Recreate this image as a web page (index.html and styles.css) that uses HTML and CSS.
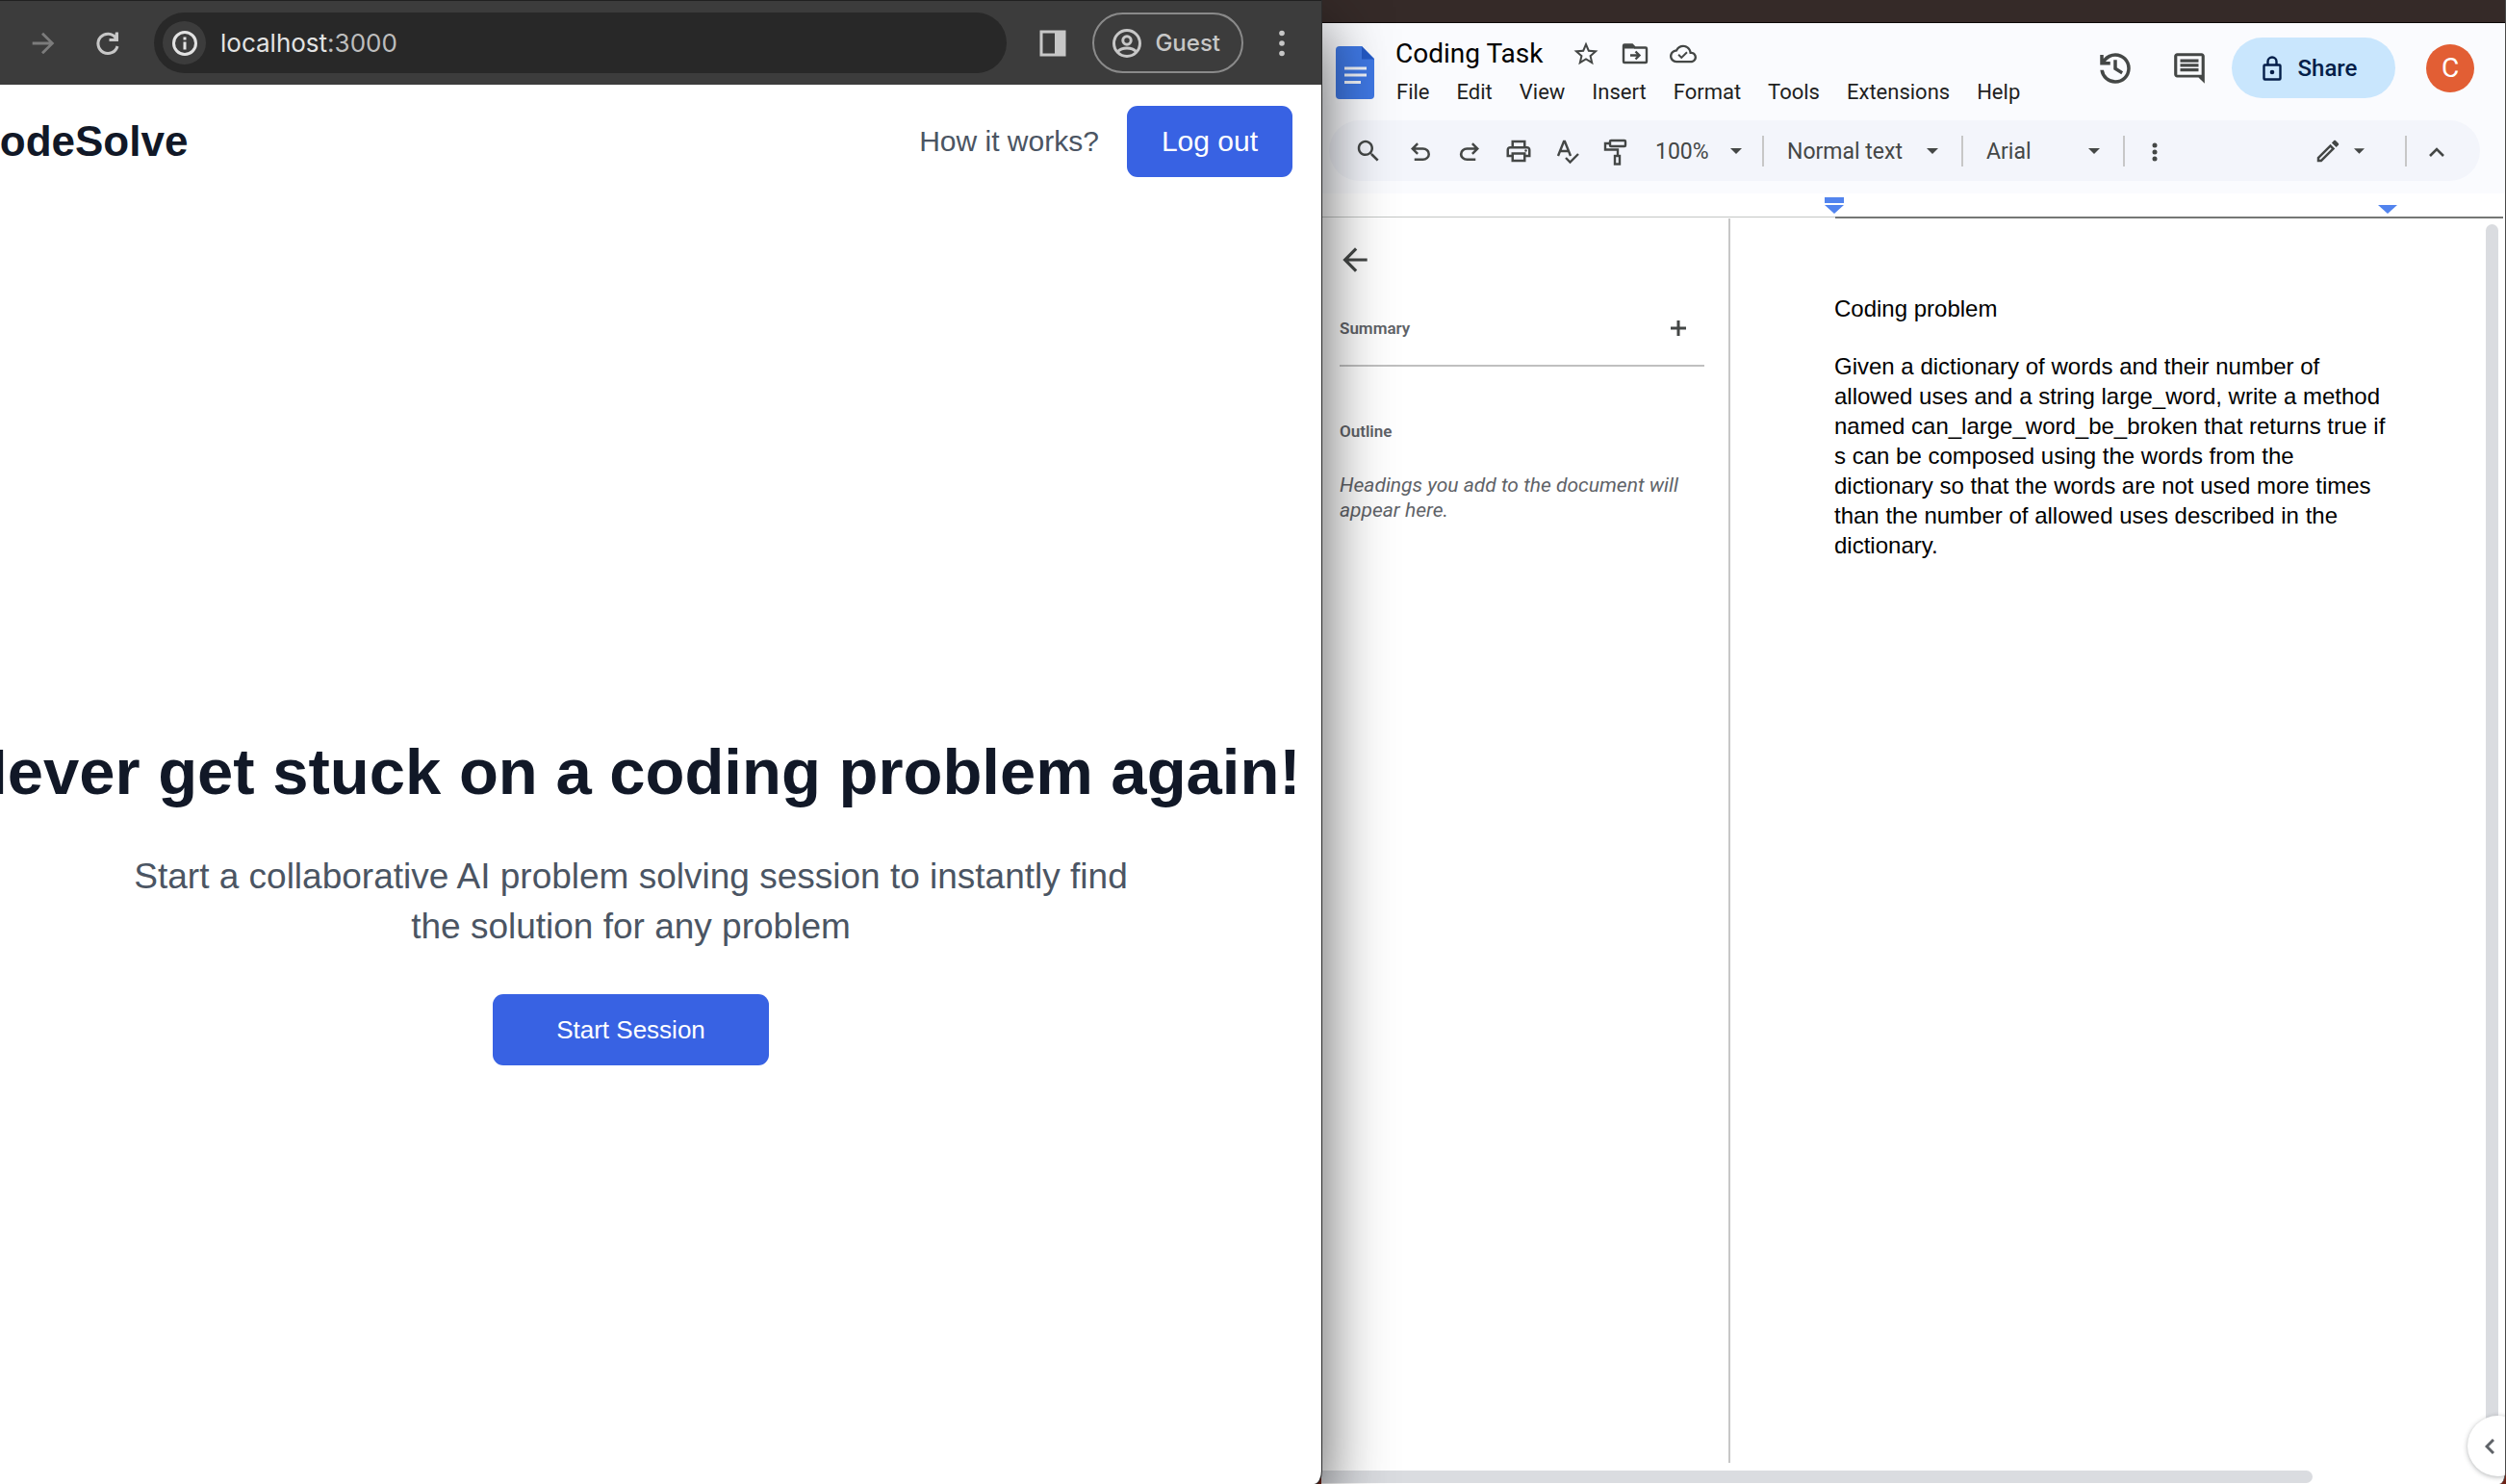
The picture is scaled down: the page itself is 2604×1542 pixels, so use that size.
FILE: index.html
```html
<!DOCTYPE html>
<html lang="en">
<head>
<meta charset="utf-8">
<title>CodeSolve</title>
<link rel="stylesheet" href="styles.css">
</head>
<body>
<div class="desktop">

  <section class="browser" aria-label="Browser window">
    <div class="browser-bar">
      <button class="bar-button bar-button-off" aria-label="Forward" disabled>
        <svg width="34" height="34" viewBox="0 0 24 24" fill="currentColor"><path d="M12 4l-1.41 1.41L16.17 11H4v2h12.17l-5.58 5.59L12 20l8-8z"/></svg>
      </button>
      <button class="bar-button" aria-label="Reload">
        <svg width="34" height="34" viewBox="0 0 34 34" fill="none" stroke="currentColor" stroke-width="3"><path d="M25.500 11.500A10.200 10.200 0 1 0 27 20"/><path d="M28 5.500V15H18.500v-3h5l1.500-6.500z" fill="currentColor" stroke="none"/></svg>
      </button>
      <div class="omnibox">
        <button class="site-info" aria-label="Site information">
          <svg width="28" height="28" viewBox="0 0 28 28" fill="none" stroke="currentColor" stroke-width="3"><circle cx="14" cy="14" r="11.500"/><path d="M14 12.500v8M14 7.500v3"/></svg>
        </button>
        <div class="address" role="textbox" aria-label="Address" contenteditable="true" spellcheck="false">localhost<span class="port">:3000</span></div>
      </div>
      <button class="bar-button panel-button" aria-label="Side panel">
        <svg width="28" height="28" viewBox="0 0 28 28"><rect x="2" y="2" width="24" height="24" fill="none" stroke="currentColor" stroke-width="3"/><rect x="16" y="2" width="10" height="24" fill="currentColor"/></svg>
      </button>
      <button class="profile">
        <svg width="32" height="32" viewBox="0 0 32 32" fill="none" stroke="currentColor" stroke-width="3"><circle cx="16" cy="16" r="13.500"/><circle cx="16" cy="13" r="4.200"/><path d="M6.500 24.500C11 19.800 21 19.800 25.500 24.500"/></svg>
        Guest
      </button>
      <button class="bar-button" aria-label="More">
        <svg width="34" height="34" viewBox="0 0 34 34" fill="currentColor"><circle cx="17" cy="6.500" r="2.800"/><circle cx="17" cy="17" r="2.800"/><circle cx="17" cy="27.500" r="2.800"/></svg>
      </button>
    </div>

    <header class="site-header">
      <a class="brand" href="#">CodeSolve</a>
      <nav class="site-nav">
        <a class="nav-link" href="#how">How it works?</a>
        <button class="primary">Log out</button>
      </nav>
    </header>
    <main class="hero">
      <h1 class="hero-title">Never get stuck on a coding problem again!</h1>
      <p class="hero-text">Start a collaborative AI problem solving session to instantly find the solution for any problem</p>
      <button class="primary primary-wide">Start Session</button>
    </main>
  </section>

  <section class="docs" aria-label="Document window">
    <div class="docs-titlebar"></div>
    <header class="docs-header">
      <svg class="docs-logo" width="40" height="55" viewBox="0 0 40 55"><path d="M4 0h23l13 13v38a4 4 0 0 1-4 4H4a4 4 0 0 1-4-4V4a4 4 0 0 1 4-4z" fill="#3f78e4"/><path d="M27 0l13 13.500H27z" fill="#2459c5"/><path d="M9 23h23M9 30h23M9 37.500h17" stroke="#f1f4fa" stroke-width="3"/></svg>
      <div class="docs-heading">
        <div class="title-row">
          <h2 class="doc-title">Coding Task</h2>
          <button class="icon-button" aria-label="Star"><svg width="30" height="30" viewBox="0 0 24 24" fill="currentColor"><path d="M22 9.240l-7.190-.62L12 2 9.190 8.630 2 9.240l5.460 4.730L5.820 21 12 17.270 18.180 21l-1.630-7.030L22 9.240zM12 15.400l-3.760 2.270 1-4.280-3.320-2.880 4.380-.38L12 6.100l1.710 4.040 4.380.38-3.320 2.880 1 4.280L12 15.400z"/></svg></button>
          <button class="icon-button" aria-label="Move"><svg width="30" height="30" viewBox="0 0 30 30" fill="none" stroke="currentColor" stroke-width="2.400"><path d="M3 7.500V23a1 1 0 0 0 1 1h22a1 1 0 0 0 1-1V9.500a1 1 0 0 0-1-1H15l-3-3H4a1 1 0 0 0-1 1z"/><path d="M4 6h8l3 3.500H4z" fill="currentColor" stroke="none"/><path d="M10 16.500h9M15.500 12.500l4 4-4 4"/></svg></button>
          <button class="icon-button" aria-label="Saved to Drive"><svg width="28" height="28" viewBox="0 0 24 24" fill="currentColor"><path d="M19.350 10.040C18.670 6.590 15.640 4 12 4 9.110 4 6.600 5.640 5.350 8.040 2.340 8.360 0 10.910 0 14c0 3.310 2.690 6 6 6h13c2.760 0 5-2.240 5-5 0-2.640-2.050-4.780-4.650-4.960zM19 18H6c-2.210 0-4-1.790-4-4 0-2.050 1.530-3.760 3.560-3.970l1.070-.11.5-.95C8.080 7.140 9.940 6 12 6c2.620 0 4.880 1.860 5.390 4.430l.3 1.500 1.530.11c1.560.1 2.780 1.410 2.780 2.960 0 1.650-1.350 3-3 3zm-8.500-3.820l-2.090-2.090-1.200 1.200 3.290 3.290 5.500-5.500-1.200-1.200z"/></svg></button>
        </div>
        <nav class="menu" aria-label="Document menu">
          <button class="menu-item">File</button>
          <button class="menu-item">Edit</button>
          <button class="menu-item">View</button>
          <button class="menu-item">Insert</button>
          <button class="menu-item">Format</button>
          <button class="menu-item">Tools</button>
          <button class="menu-item">Extensions</button>
          <button class="menu-item">Help</button>
        </nav>
      </div>
      <div class="docs-actions">
        <button class="icon-button" aria-label="Version history"><svg width="42" height="42" viewBox="0 -960 960 960" fill="currentColor"><path d="M480-120q-138 0-240.500-91.500T122-440h82q14 104 92.500 172T480-200q117 0 198.500-81.500T760-480q0-117-81.500-198.500T480-760q-69 0-129 32t-101 88h110v80H120v-240h80v94q51-64 124.500-99T480-840q75 0 140.500 28.500t114 77q48.500 48.500 77 114T840-480q0 75-28.500 140.500t-77 114q-48.500 48.500-114 77T480-120Zm144-220L440-450v-230h80v184l144 88-40 68Z"/></svg></button>
        <button class="icon-button" aria-label="Comments"><svg width="38" height="38" viewBox="0 0 24 24" fill="currentColor"><path d="M21.990 4c0-1.100-.89-2-1.990-2H4c-1.100 0-2 .9-2 2v12c0 1.100.9 2 2 2h14l4 4-.01-18zM20 4v12.200H4V4h16zM6 12h12v2H6zm0-3h12v2H6zm0-3h12v2H6z"/></svg></button>
        <button class="share">
          <svg width="20" height="26" viewBox="0 0 20 26" fill="none" stroke="currentColor" stroke-width="2.400"><rect x="1.500" y="9.500" width="17" height="15" rx="1"/><path d="M5.500 9.500V6a4.500 4.500 0 0 1 9 0v3.500"/><circle cx="10" cy="17" r="2.300" fill="currentColor" stroke="none"/></svg>
          Share
        </button>
        <button class="avatar" aria-label="Account">C</button>
      </div>
    </header>

    <div class="toolbar" role="toolbar" aria-label="Formatting">
      <div class="tool-group">
        <button class="tool" aria-label="Search"><svg width="30" height="30" viewBox="0 0 24 24" fill="currentColor"><path d="M15.500 14h-.79l-.28-.27C15.410 12.590 16 11.110 16 9.500 16 5.910 13.090 3 9.500 3S3 5.910 3 9.500 5.910 16 9.500 16c1.610 0 3.090-.59 4.230-1.570l.27.28v.79l5 4.990L20.490 19l-4.990-5zm-6 0C7.010 14 5 11.990 5 9.500S7.010 5 9.500 5 14 7.010 14 9.500 11.990 14 9.500 14z"/></svg></button>
        <button class="tool" aria-label="Undo"><svg width="30" height="30" viewBox="0 -1000 960 960" fill="currentColor"><path d="M280-200v-80h284q63 0 109.500-40T720-420q0-60-46.500-100T564-560H312l104 104-56 56-200-200 200-200 56 56-104 104h252q97 0 169.500 63T800-420q0 94-72.500 157T564-200H280Z"/></svg></button>
        <button class="tool" aria-label="Redo"><svg width="30" height="30" viewBox="0 -1000 960 960" fill="currentColor"><path d="M396-200q-97 0-169.500-63T154-420q0-94 72.500-157T396-640h252L544-744l56-56 200 200-200 200-56-56 104-104H396q-63 0-109.500 40T240-420q0 60 46.500 100T396-280h284v80H396Z"/></svg></button>
        <button class="tool" aria-label="Print"><svg width="30" height="30" viewBox="0 0 24 24" fill="currentColor"><path d="M19 8h-1V3H6v5H5c-1.660 0-3 1.340-3 3v6h4v4h12v-4h4v-6c0-1.660-1.340-3-3-3zM8 5h8v3H8V5zm8 12v2H8v-4h8v2zm2-2v-2H6v2H4v-4c0-.55.45-1 1-1h14c.55 0 1 .45 1 1v4h-2z"/><circle cx="18" cy="11.500" r="1"/></svg></button>
        <button class="tool" aria-label="Spelling"><svg width="30" height="30" viewBox="0 0 30 30" fill="none" stroke="currentColor" stroke-width="2.400"><path d="M5 20L11 5h1l6 15M7 15h9M13 22l4.500 4.500L26 18"/></svg></button>
        <button class="tool" aria-label="Paint format"><svg width="30" height="30" viewBox="0 0 30 30" fill="none" stroke="currentColor" stroke-width="2.400"><rect x="8" y="4" width="16" height="6" rx="1"/><path d="M8 7H3v6.500h13V19"/><rect x="13" y="20" width="5" height="8.500"/></svg></button>
      </div>
      <label class="picker picker-zoom">
        <select class="picker-select" aria-label="Zoom"><option>100%</option></select>
        <svg width="12" height="6" viewBox="0 0 12 6" fill="currentColor"><path d="M0 0h12L6 6z"/></svg>
      </label>
      <span class="rule"></span>
      <label class="picker picker-style">
        <select class="picker-select" aria-label="Style"><option>Normal text</option></select>
        <svg width="12" height="6" viewBox="0 0 12 6" fill="currentColor"><path d="M0 0h12L6 6z"/></svg>
      </label>
      <span class="rule"></span>
      <label class="picker picker-font">
        <select class="picker-select" aria-label="Font"><option>Arial</option></select>
        <svg width="12" height="6" viewBox="0 0 12 6" fill="currentColor"><path d="M0 0h12L6 6z"/></svg>
      </label>
      <span class="rule"></span>
      <button class="tool" aria-label="More tools"><svg width="30" height="30" viewBox="0 0 30 30" fill="currentColor"><circle cx="15" cy="9" r="2.500"/><circle cx="15" cy="16" r="2.500"/><circle cx="15" cy="23" r="2.500"/></svg></button>
      <div class="tool-end">
        <button class="mode" aria-label="Editing mode">
          <svg width="30" height="30" viewBox="0 0 24 24" fill="currentColor"><path d="M14.060 9.020l.92.92L5.920 19H5v-.92l9.060-9.060M17.660 3c-.25 0-.51.1-.7.29l-1.830 1.830 3.750 3.750 1.830-1.830c.39-.39.39-1.020 0-1.410l-2.340-2.340c-.2-.2-.45-.29-.71-.29zm-3.600 3.190L3 17.250V21h3.750L17.810 9.940l-3.750-3.750z"/></svg>
          <svg width="11" height="6" viewBox="0 0 12 6" fill="currentColor"><path d="M0 0h12L6 6z"/></svg>
        </button>
        <span class="rule"></span>
        <button class="tool" aria-label="Hide menus"><svg width="30" height="30" viewBox="0 0 30 30" fill="none" stroke="currentColor" stroke-width="2.600"><path d="M8 20l7-7 7 7"/></svg></button>
      </div>
    </div>

    <div class="ruler">
      <div class="ruler-margin">
        <svg class="indent-left" width="20" height="17" viewBox="0 0 20 17" fill="#5284ee"><path d="M0 0h20v6H0zM0 8h20l-10 9z"/></svg>
      </div>
      <div class="ruler-page">
        <svg class="indent-right" width="20" height="9" viewBox="0 0 20 9" fill="#5284ee"><path d="M0 0h20l-10 9z"/></svg>
      </div>
    </div>

    <div class="docs-body">
      <aside class="outline">
        <button class="icon-button outline-back" aria-label="Close outline"><svg width="38" height="38" viewBox="0 0 24 24" fill="currentColor"><path d="M20 11H7.830l5.590-5.590L12 4l-8 8 8 8 1.410-1.410L7.830 13H20v-2z"/></svg></button>
        <div class="summary">
          <h3 class="outline-label">Summary</h3>
          <button class="icon-button" aria-label="Add summary"><svg width="18" height="18" viewBox="0 0 18 18" stroke="currentColor" stroke-width="3"><path d="M9 1v16M1 9h16"/></svg></button>
        </div>
        <h3 class="outline-label">Outline</h3>
        <p class="outline-hint">Headings you add to the document will appear here.</p>
      </aside>
      <article class="page">
        <p>Coding problem</p>
        <p>Given a dictionary of words and their number of allowed uses and a string large_word, write a method named can_large_word_be_broken that returns true if s can be composed using the words from the dictionary so that the words are not used more times than the number of allowed uses described in the dictionary.</p>
      </article>
      <div class="scroll-vertical"></div>
    </div>
    <div class="scroll-horizontal"></div>
    <button class="side-toggle" aria-label="Show side panel"><svg width="10" height="16" viewBox="0 0 10 16" fill="none" stroke="currentColor" stroke-width="3"><path d="M9 1L2 8l7 7"/></svg></button>
  </section>

</div>
</body>
</html>
```
FILE: styles.css
```css
* {
  box-sizing: border-box;
}

body {
  margin: 0;
  background: #6e2216;
  overflow: hidden;
}

h1, h2, h3, p {
  margin: 0;
}

button, select {
  margin: 0;
  padding: 0;
  border: 0;
  background: none;
  color: inherit;
  font: inherit;
}

a {
  color: inherit;
  text-decoration: none;
}

svg {
  display: block;
  flex: none;
}

.desktop {
  display: grid;
  grid-template-columns: minmax(0, 1373fr) minmax(0, 1231fr);
  min-height: 100vh;
}

/* Browser window, pushed partly past the left edge of the screen */
.browser {
  position: relative;
  z-index: 1;
  margin-left: -62px;
  background: #fff;
  border-bottom-right-radius: 8px 14px;
  box-shadow: 0 0 0 1px #2b2b2b, 0 30px 70px rgba(0, 0, 0, 0.68);
  font-family: "Liberation Sans", Arial, sans-serif;
}

.browser-bar {
  display: flex;
  align-items: center;
  height: 88px;
  padding: 0 24px 0 90px;
  border-top: 1px solid #202020;
  background: #3c3c3c;
  color: #c7c7c7;
  font-family: Inter, sans-serif;
}

.bar-button {
  margin-right: 31px;
}

.bar-button:last-child {
  margin-right: 0;
}

.bar-button-off {
  margin-right: 33px;
  color: #7c7c7c;
}

.omnibox {
  display: flex;
  flex: 1;
  align-items: center;
  gap: 15px;
  height: 63px;
  padding: 0 9px;
  border-radius: 32px;
  background: #282828;
}

.site-info {
  display: grid;
  place-items: center;
  width: 45px;
  height: 45px;
  border-radius: 50%;
  background: #3c3c3c;
  color: #e3e3e3;
}

.address {
  color: #e3e3e3;
  font-size: 26px;
  line-height: 32px;
}

.port {
  color: #bdbdbd;
}

.panel-button {
  margin: 0 27px 0 34px;
}

.profile {
  display: flex;
  align-items: center;
  gap: 13px;
  height: 63px;
  margin-right: 23px;
  padding: 0 22px 0 18px;
  border: 2px solid #8a8a8a;
  border-radius: 32px;
  font-size: 24px;
  font-weight: 500;
}

.site-header {
  display: flex;
  align-items: center;
  justify-content: space-between;
  padding: 22px 30px;
}

.brand {
  color: #111827;
  font-size: 44px;
  font-weight: 700;
  line-height: 52px;
}

.site-nav {
  display: flex;
  align-items: center;
  gap: 29px;
  font-size: 30px;
}

.nav-link {
  color: #4b5563;
}

.primary {
  height: 74px;
  padding: 0 36px;
  border-radius: 11px;
  background: #3862e3;
  color: #fff;
}

.hero {
  display: flex;
  flex-direction: column;
  align-items: center;
  padding-top: 559px;
  text-align: center;
}

.hero-title {
  color: #111827;
  font-size: 67px;
  line-height: 74px;
  white-space: nowrap;
}

.hero-text {
  max-width: 1070px;
  margin-top: 46px;
  color: #4b5563;
  font-size: 37px;
  line-height: 52px;
}

.primary-wide {
  margin-top: 44px;
  padding: 0 66px;
  font-size: 26px;
}

/* Document editor window */
.docs {
  position: relative;
  display: flex;
  flex-direction: column;
  overflow: hidden;
  border-right: 1px solid #4a4a4a;
  border-bottom-right-radius: 7px 14px;
  background: #fff;
  color: #444746;
  font-family: Roboto, sans-serif;
}

.docs-titlebar {
  height: 24px;
  border-bottom: 1px solid #0d0808;
  background: #352a28;
}

.docs-header {
  display: flex;
  align-items: flex-start;
  height: 101px;
  padding: 0 32px 0 15px;
  background: #fafbfe;
}

.docs-logo {
  margin: 24px 22px 0 0;
}

.docs-heading {
  padding-top: 12px;
}

.title-row {
  display: flex;
  align-items: center;
  gap: 21px;
  height: 40px;
}

.doc-title {
  margin-right: 9px;
  color: #000;
  font-size: 28px;
  font-weight: 400;
  line-height: 40px;
}

.icon-button {
  display: block;
}

.menu {
  display: flex;
  gap: 28px;
  padding-left: 1px;
}

.menu-item {
  color: #1f1f1f;
  font-size: 22px;
  line-height: 40px;
}

.docs-actions {
  display: flex;
  align-items: center;
  margin: 15px 0 0 auto;
}

.docs-actions .icon-button {
  margin-right: 37px;
}

.docs-actions .icon-button + .icon-button {
  margin-right: 25px;
}

.share {
  display: flex;
  align-items: center;
  justify-content: center;
  gap: 17px;
  width: 170px;
  height: 63px;
  padding-right: 8px;
  border-radius: 32px;
  background: #c9e6fd;
  color: #041e49;
  font-size: 24px;
  font-weight: 500;
}

.avatar {
  width: 50px;
  height: 50px;
  margin-left: 32px;
  border-radius: 50%;
  background: #e25e34;
  color: #fff;
  font-size: 28px;
}

.toolbar {
  display: flex;
  align-items: center;
  height: 63px;
  margin: 0 26px 0 8px;
  padding: 0 20px 0 15px;
  border-radius: 32px;
  background: #f3f5fb;
  box-shadow: 0 0 0 40px #fafbfe;
  clip-path: inset(0 -40px -13px -40px);
  font-size: 23px;
}

.tool-group {
  display: flex;
  margin-right: 15px;
}

.tool {
  display: grid;
  place-items: center;
  width: 51px;
  height: 51px;
}

.tool:first-child {
  margin-right: 3px;
}

.picker {
  display: flex;
  align-items: center;
  justify-content: space-between;
}

.picker-zoom {
  width: 90px;
  margin-right: 21px;
}

.picker-style {
  width: 157px;
  margin: 0 24px;
}

.picker-font {
  width: 118px;
  margin: 0 24px;
}

.picker-select {
  appearance: none;
  padding-top: 2px;
  line-height: 30px;
}

.rule {
  width: 2px;
  height: 32px;
  background: #c7c7c7;
}

.rule + .tool {
  margin-left: 5px;
}

.tool-end {
  display: flex;
  align-items: center;
  margin-left: auto;
}

.mode {
  display: flex;
  align-items: center;
  gap: 12px;
  margin-right: 42px;
}

.ruler {
  display: flex;
  align-items: flex-start;
  height: 26px;
  margin: 13px 2px 0 0;
}

.ruler-margin {
  position: relative;
  width: 534px;
  height: 25px;
  border-bottom: 1px solid #c4c7c5;
}

.ruler-page {
  position: relative;
  flex: 1;
  height: 26px;
  border-bottom: 2px solid #757775;
}

.indent-left {
  position: absolute;
  right: -9px;
  bottom: 3px;
}

.indent-right {
  position: absolute;
  right: 110px;
  bottom: 3px;
}

.docs-body {
  display: flex;
  flex: 1;
}

.outline {
  width: 425px;
  padding: 24px 25px 0 19px;
  border-right: 2px solid #c7c7c7;
}

.outline-back {
  margin: 0 0 42px -3px;
}

.summary {
  display: flex;
  align-items: center;
  justify-content: space-between;
  height: 50px;
  margin-bottom: 55px;
  padding: 0 18px 28px 0;
  border-bottom: 2px solid #c0c0c0;
}

.outline-label {
  color: #5f6368;
  font-size: 17px;
  font-weight: 600;
  line-height: 24px;
}

.summary + .outline-label {
  margin-bottom: 31px;
}

.outline-hint {
  color: #5f6368;
  font-size: 21px;
  font-style: italic;
  line-height: 26px;
}

.page {
  flex: 1;
  max-width: 700px;
  padding: 78px 12px 0 108px;
  color: #000;
  font-family: "Liberation Sans", Arial, sans-serif;
  font-size: 24px;
  line-height: 31px;
}

.page p {
  margin-bottom: 29px;
}

.scroll-vertical {
  width: 13px;
  margin: 6px 7px 0 auto;
  border-radius: 7px 7px 0 0;
  background: #dadce0;
}

.scroll-horizontal {
  height: 13px;
  margin: 8px 200px 1px 0;
  border-radius: 0 7px 7px 0;
  background: #dadce0;
}

.side-toggle {
  position: absolute;
  right: -24px;
  bottom: 8px;
  width: 63px;
  height: 63px;
  padding-left: 18px;
  border-radius: 50%;
  background: #fff;
  box-shadow: 0 1px 5px rgba(60, 64, 67, 0.4);
  color: #5f6368;
}
```
